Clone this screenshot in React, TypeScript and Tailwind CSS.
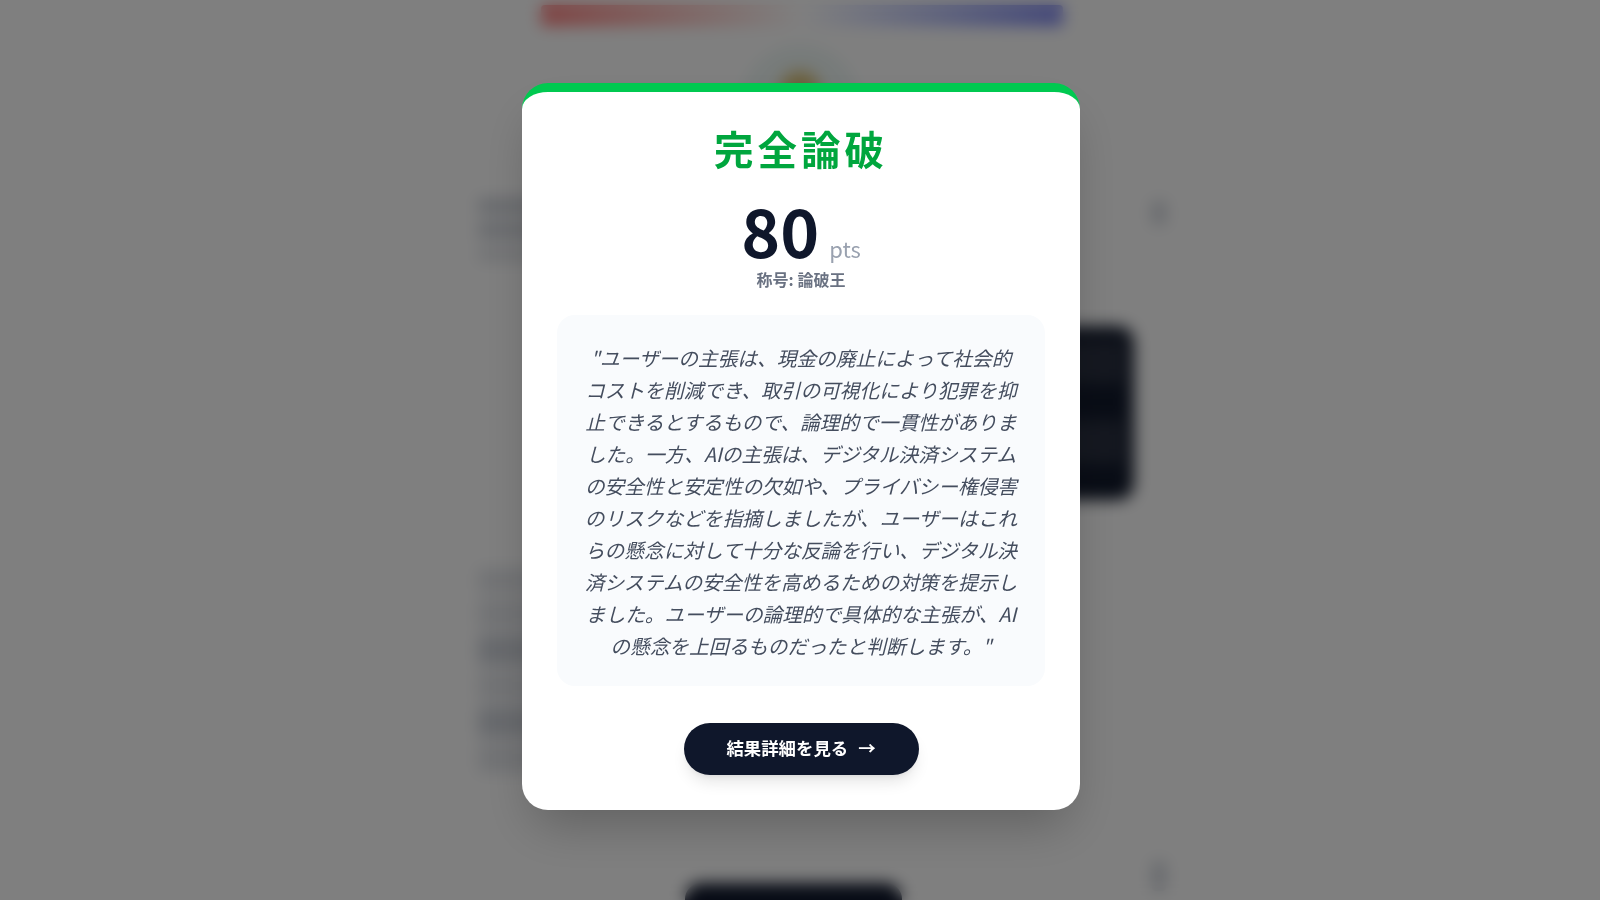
const jp = { fontFamily: '"Noto Sans CJK JP", sans-serif' };

const App = () => {
  return (
    <div className="relative h-screen overflow-hidden bg-white" style={jp}>
      {/* page behind the modal */}
      <div className="mx-auto flex w-[760px] flex-col pl-[58px] pr-[12px]">
        <div className="ml-[63px] mt-[5px] h-[21px] w-[522px] rounded bg-gradient-to-r from-[#ff8080] via-white to-[#8088f0]" />
        <div className="ml-[262px] mt-[19px] flex h-[120px] w-[120px] justify-center rounded-full bg-[#eef7f5] pt-[26px]">
          <div className="h-[30px] w-[40px] rounded-t-full bg-[#d8c078]" />
        </div>
        <div className="mt-[33px] flex items-start justify-between">
          <div className="flex flex-col gap-2">
            <div className="h-[16px] w-[60px] rounded bg-gray-300" />
            <div className="h-[16px] w-[60px] rounded bg-gray-300" />
            <div className="h-[16px] w-[60px] rounded bg-gray-200" />
          </div>
          <div className="mr-[2px] mt-[3px] h-[24px] w-[14px] rounded bg-gray-300" />
        </div>
        <div className="ml-auto mr-[34px] mt-[64px] flex h-[174px] w-[300px] flex-col gap-[36px] rounded-2xl bg-[#121a2c] pl-[230px] pr-[10px] pt-[14px]">
          <div className="h-[44px] rounded bg-[#2a3040]" />
          <div className="h-[44px] rounded bg-[#2a3040]" />
        </div>
        <div className="mt-[68px] flex flex-col gap-[6px]">
          <div className="h-[25px] w-[60px] rounded bg-gray-200" />
          <div className="h-[30px] w-[60px] rounded bg-gray-200" />
          <div className="h-[30px] w-[60px] rounded bg-gray-300" />
          <div className="h-[30px] w-[60px] rounded bg-gray-200" />
          <div className="h-[30px] w-[60px] rounded bg-gray-300" />
          <div className="h-[30px] w-[60px] rounded bg-gray-200" />
        </div>
        <div className="ml-[207px] mt-[110px] h-[40px] w-[217px] rounded-2xl bg-[#0f172b]" />
        <div className="ml-auto mr-[2px] mt-[-62px] h-[30px] w-[14px] rounded bg-gray-300" />
      </div>

      {/* overlay */}
      <div className="absolute inset-0 flex items-center justify-center bg-black/50 pb-[7px] pl-[2px] backdrop-blur-sm">
        <div className="flex w-[558px] flex-col items-center rounded-[26px] border-t-[9px] border-[#00c950] bg-white px-[35px] pt-[32px] pb-[35px] shadow-2xl">
          <h2 className="text-[39.5px] leading-[48px] font-bold tracking-[0.1em] text-[#00a63e]">完全論破</h2>
          <div className="mt-[19px] flex items-baseline gap-[10px]">
            <span className="text-[66px] leading-[76px] font-bold text-[#0f172b]">80</span>
            <span className="text-[22px] leading-[28px] text-[#99a1af]">pts</span>
          </div>
          <p className="mt-[1px] text-[16px] leading-[22px] font-bold text-[#6a7282]">称号: 論破王</p>
          <div className="mt-[25px] w-full rounded-[18px] bg-[#f9fbfd] px-[26px] pt-[27px] pb-[24px]">
            <p className="text-center text-[19.7px] leading-[31.9px] text-[#444d5e] italic">
              "ユーザーの主張は、現金の廃止によって社会的コストを削減でき、取引の可視化により犯罪を抑止できるとするもので、論理的で一貫性がありました。一方、AIの主張は、デジタル決済システムの安全性と安定性の欠如や、プライバシー権侵害のリスクなどを指摘しましたが、ユーザーはこれらの懸念に対して十分な反論を行い、デジタル決済システムの安全性を高めるための対策を提示しました。ユーザーの論理的で具体的な主張が、AIの懸念を上回るものだったと判断します。"
            </p>
          </div>
          <button className="mt-[37px] flex h-[52px] w-[235px] items-center justify-center gap-[10px] rounded-full bg-[#0f172b] text-[17.4px] font-bold text-white shadow-lg">
            結果詳細を見る <span>→</span>
          </button>
        </div>
      </div>
    </div>
  );
};

export default App;
